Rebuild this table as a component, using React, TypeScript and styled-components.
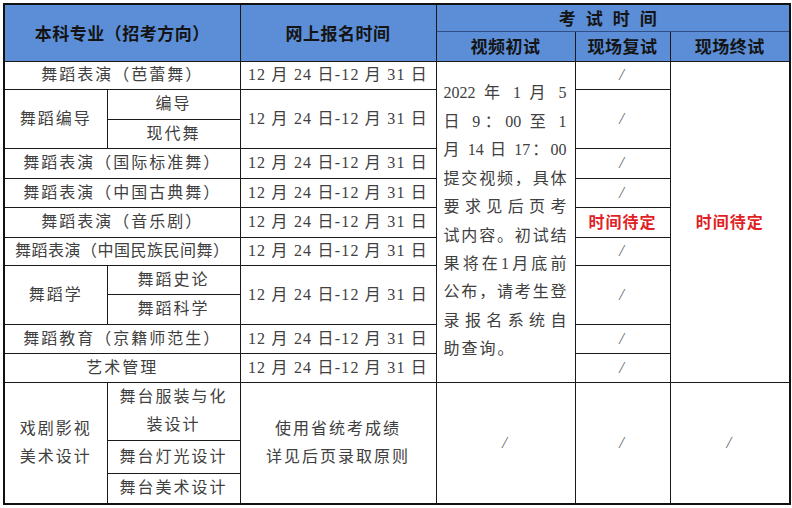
import styled, { createGlobalStyle } from "styled-components";

const GlobalStyle = createGlobalStyle`
    html, body {
        margin: 0;
        padding: 0;
        background: #ffffff;
    }
`;

const Page = styled.div`
    padding: 3px 2px 0 3px;
    font-family: "Liberation Serif", "Noto Sans CJK SC", serif;
    color: #404040;
`;

const Table = styled.table`
    width: 786px;
    table-layout: fixed;
    border-collapse: collapse;
    border: 2px solid #111;
`;

const Row = styled.tr<{ $h: number }>`
    height: ${(p) => p.$h}px;
`;

const Head = styled.th<{ $spaced?: boolean; $thin?: boolean }>`
    background-color: #5b8ed7;
    border: 1.5px solid #1a1a1a;
    border-bottom-color: ${(p) => (p.$thin ? "#2f4f86" : "#1a1a1a")};
    border-bottom-width: ${(p) => (p.$thin ? "1px" : "1.5px")};
    padding: 0;
    font-family: "Noto Sans CJK SC", sans-serif;
    font-weight: 700;
    font-size: 17px;
    line-height: 20px;
    color: #141414;
    letter-spacing: ${(p) => (p.$spaced ? "10px" : "0.5px")};
    text-align: center;
    vertical-align: middle;
`;

const Cell = styled.td<{ $tight?: boolean }>`
    border: 1.5px solid #1a1a1a;
    padding: 0;
    font-size: 16px;
    letter-spacing: ${(p) => (p.$tight ? "0.5px" : "2px")};
    text-align: center;
    vertical-align: middle;
    white-space: nowrap;
    line-height: 22px;
`;

const DateText = styled.span`
    letter-spacing: 1.2px;
    font-size: 16px;
`;

const Slash = styled.span`
    color: #666;
    font-size: 17px;
    font-style: italic;
`;

const Pending = styled.span`
    color: #e11f26;
    font-family: "Noto Sans CJK SC", sans-serif;
    font-weight: 700;
    font-size: 16px;
    letter-spacing: 1px;
`;

const VideoBlock = styled.div`
    padding: 0 8px 0 7px;
    font-size: 16px;
    line-height: 28.4px;
    text-align: left;
    white-space: normal;
`;

const VideoLine = styled.div<{ $last?: boolean }>`
    text-align: justify;
    text-align-last: ${(p) => (p.$last ? "left" : "justify")};
    letter-spacing: ${(p) => (p.$last ? "2px" : "0")};
    white-space: nowrap;
`;

const Stack = styled.div`
    line-height: 28px;
`;

const date = "12 月 24 日-12 月 31 日";

const videoLines = [
    "2022 年 1 月 5",
    "日 9：00 至 1",
    "月 14 日 17：00",
    "提交视频，具体",
    "要求见后页考",
    "试内容。初试结",
    "果将在1月底前",
    "公布，请考生登",
    "录报名系统自",
    "助查询。",
];

export default function App() {
    return (
        <Page>
            <GlobalStyle />
            <Table>
                <colgroup>
                    <col style={{ width: 103 }} />
                    <col style={{ width: 133 }} />
                    <col style={{ width: 196 }} />
                    <col style={{ width: 139 }} />
                    <col style={{ width: 95 }} />
                    <col style={{ width: 120 }} />
                </colgroup>
                <thead>
                    <Row $h={27}>
                        <Head colSpan={2} rowSpan={2}>本科专业（招考方向）</Head>
                        <Head rowSpan={2}>网上报名时间</Head>
                        <Head colSpan={3} $spaced $thin>考试时间</Head>
                    </Row>
                    <Row $h={30}>
                        <Head>视频初试</Head>
                        <Head>现场复试</Head>
                        <Head>现场终试</Head>
                    </Row>
                </thead>
                <tbody>
                    <Row $h={28}>
                        <Cell colSpan={2}>舞蹈表演（芭蕾舞）</Cell>
                        <Cell><DateText>{date}</DateText></Cell>
                        <Cell rowSpan={11}>
                            <VideoBlock>
                                {videoLines.map((line, i) => (
                                    <VideoLine key={i} $last={i === videoLines.length - 1}>
                                        {line}
                                    </VideoLine>
                                ))}
                            </VideoBlock>
                        </Cell>
                        <Cell><Slash>/</Slash></Cell>
                        <Cell rowSpan={11}><Pending>时间待定</Pending></Cell>
                    </Row>
                    <Row $h={30}>
                        <Cell rowSpan={2}>舞蹈编导</Cell>
                        <Cell>编导</Cell>
                        <Cell rowSpan={2}><DateText>{date}</DateText></Cell>
                        <Cell rowSpan={2}><Slash>/</Slash></Cell>
                    </Row>
                    <Row $h={29}>
                        <Cell>现代舞</Cell>
                    </Row>
                    <Row $h={30}>
                        <Cell colSpan={2}>舞蹈表演（国际标准舞）</Cell>
                        <Cell><DateText>{date}</DateText></Cell>
                        <Cell><Slash>/</Slash></Cell>
                    </Row>
                    <Row $h={29}>
                        <Cell colSpan={2}>舞蹈表演（中国古典舞）</Cell>
                        <Cell><DateText>{date}</DateText></Cell>
                        <Cell><Slash>/</Slash></Cell>
                    </Row>
                    <Row $h={30}>
                        <Cell colSpan={2}>舞蹈表演（音乐剧）</Cell>
                        <Cell><DateText>{date}</DateText></Cell>
                        <Cell><Pending>时间待定</Pending></Cell>
                    </Row>
                    <Row $h={28}>
                        <Cell colSpan={2} $tight>舞蹈表演（中国民族民间舞）</Cell>
                        <Cell><DateText>{date}</DateText></Cell>
                        <Cell><Slash>/</Slash></Cell>
                    </Row>
                    <Row $h={29}>
                        <Cell rowSpan={2}>舞蹈学</Cell>
                        <Cell>舞蹈史论</Cell>
                        <Cell rowSpan={2}><DateText>{date}</DateText></Cell>
                        <Cell rowSpan={2}><Slash>/</Slash></Cell>
                    </Row>
                    <Row $h={30}>
                        <Cell>舞蹈科学</Cell>
                    </Row>
                    <Row $h={29}>
                        <Cell colSpan={2}>舞蹈教育（京籍师范生）</Cell>
                        <Cell><DateText>{date}</DateText></Cell>
                        <Cell><Slash>/</Slash></Cell>
                    </Row>
                    <Row $h={29}>
                        <Cell colSpan={2}>艺术管理</Cell>
                        <Cell><DateText>{date}</DateText></Cell>
                        <Cell><Slash>/</Slash></Cell>
                    </Row>
                    <Row $h={58}>
                        <Cell rowSpan={3}>
                            <Stack>戏剧影视<br />美术设计</Stack>
                        </Cell>
                        <Cell>
                            <Stack>舞台服装与化<br />装设计</Stack>
                        </Cell>
                        <Cell rowSpan={3}>
                            <Stack>使用省统考成绩<br />详见后页录取原则</Stack>
                        </Cell>
                        <Cell rowSpan={3}><Slash>/</Slash></Cell>
                        <Cell rowSpan={3}><Slash>/</Slash></Cell>
                        <Cell rowSpan={3}><Slash>/</Slash></Cell>
                    </Row>
                    <Row $h={33}>
                        <Cell>舞台灯光设计</Cell>
                    </Row>
                    <Row $h={31}>
                        <Cell>舞台美术设计</Cell>
                    </Row>
                </tbody>
            </Table>
        </Page>
    );
}
